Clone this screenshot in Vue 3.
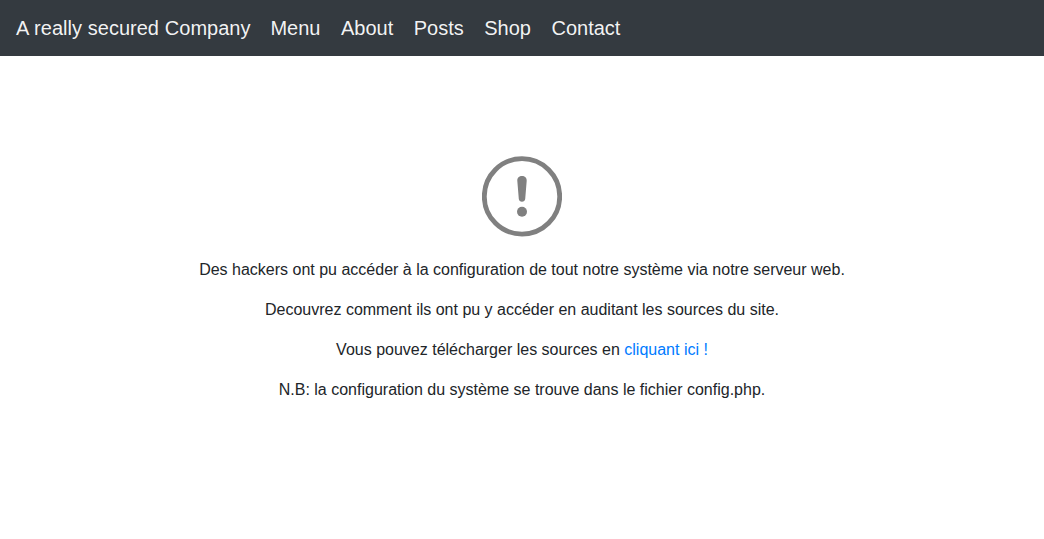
<template>
  <div class="page">
    <nav class="navbar">
      <a class="brand" href="#">A really secured Company</a>
      <ul class="nav-links">
        <li v-for="link in links" :key="link"><a href="#">{{ link }}</a></li>
      </ul>
    </nav>

    <main class="content">
      <svg class="alert-icon" width="80" height="81" viewBox="0 0 80 81" fill="none">
        <circle cx="40" cy="40.4" r="37.7" stroke="#808080" stroke-width="4.8" />
        <path
          d="M40 20c-2.800 0-4.900 2.100-4.700 4.700l1.500 18.300c.1 1.600 1.500 2.800 3.200 2.800s3.100-1.200 3.200-2.800l1.500-18.300c.2-2.600-1.900-4.700-4.700-4.700z"
          fill="#808080" />
        <circle cx="40" cy="55.700" r="5" fill="#808080" />
      </svg>
      <p>Des hackers ont pu accéder à la configuration de tout notre système via notre serveur web.</p>
      <p>Decouvrez comment ils ont pu y accéder en auditant les sources du site.</p>
      <p>Vous pouvez télécharger les sources en <a href="#">cliquant ici !</a></p>
      <p>N.B: la configuration du système se trouve dans le fichier config.php.</p>
    </main>
  </div>
</template>

<script setup>
const links = ['Menu', 'About', 'Posts', 'Shop', 'Contact']
</script>

<style scoped>
.page {
  font-family: "Liberation Sans", Arial, sans-serif;
  font-size: 16px;
  line-height: 24px;
  color: #212529;
}

.navbar {
  display: flex;
  align-items: center;
  height: 56px;
  padding: 0 16px;
  background: #343a40;
  font-size: 20px;
}

.navbar a {
  color: rgba(255, 255, 255, 0.95);
  text-decoration: none;
}

.brand {
  margin-right: 20px;
  word-spacing: 0.33px;
}

.nav-links {
  display: flex;
  gap: 20.5px;
  margin: 0;
  padding: 0;
  list-style: none;
}

.content {
  display: flex;
  flex-direction: column;
  align-items: center;
  padding-top: 100px;
  text-align: center;
}

.alert-icon {
  display: block;
  margin-bottom: 21px;
}

p {
  margin: 0 0 16px;
}

p a {
  color: #007bff;
  text-decoration: none;
}
</style>

<style>
body {
  background: #fff;
}
</style>
